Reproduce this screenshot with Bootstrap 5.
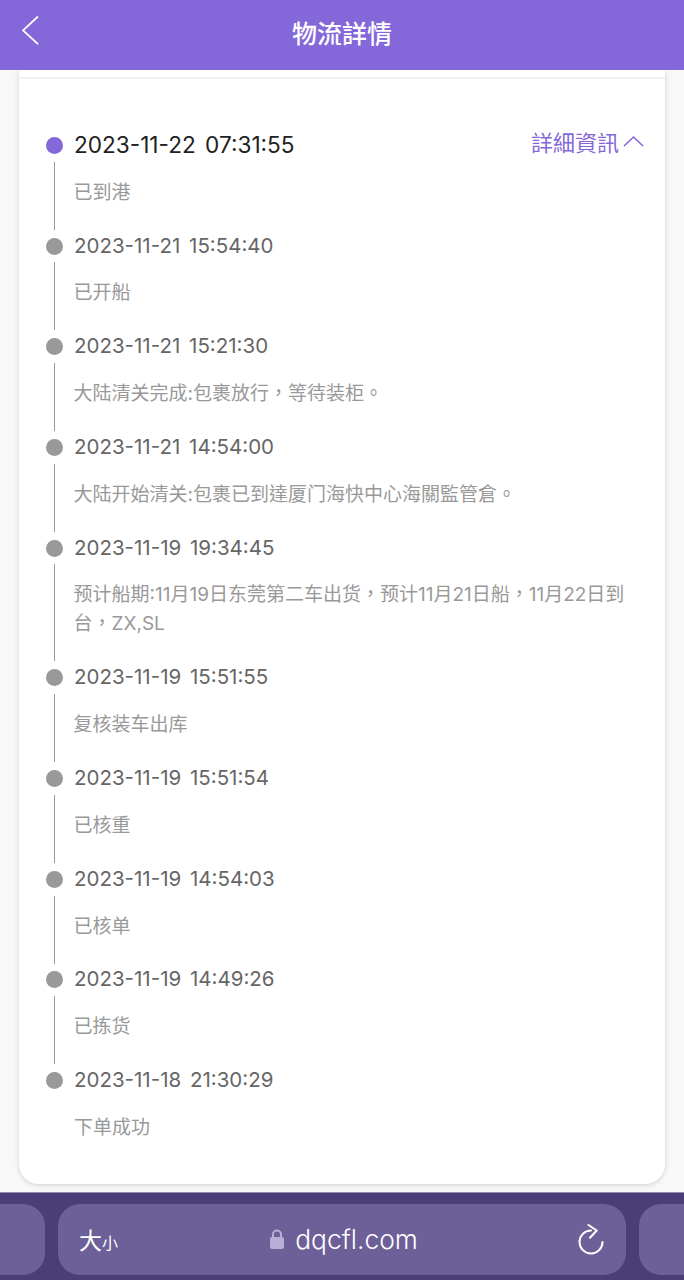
<!DOCTYPE html>
<html lang="zh-Hant">
<head>
  <meta charset="UTF-8"/>
  <meta name="viewport" content="width=device-width, initial-scale=1.0"/>
  <title>物流詳情</title>
  <link href="https://cdn.jsdelivr.net/npm/bootstrap@5.3.0/dist/css/bootstrap.min.css" rel="stylesheet"/>
  <style>
    body {
      background-color: #f8f8f8;
      font-family: Inter, "Noto Sans CJK TC", sans-serif;
      height: 1280px;
      overflow: hidden;
    }
    .top-head {
      height: 70px;
      padding-bottom: 4px;
      background-color: #8468d9;
      color: #fff;
      font-size: 25px;
      font-weight: 500;
      font-family: "Noto Sans CJK TC", sans-serif;
    }
    .back-btn {
      left: 21px;
      top: 15px;
      line-height: 0;
    }
    .page-body {
      padding: 0 19px;
      height: 1122px;
    }
    .sheet {
      height: 1114px;
      padding-top: 7px;
      background-color: #fff;
      border-radius: 0 0 20px 20px;
      box-shadow: 0 1px 5px rgba(0, 0, 0, .16);
    }
    .sheet-rule {
      height: 2px;
      background-color: #f0f0f0;
    }
    .track {
      padding: 50px 21px 0 27px;
    }
    .stamp {
      height: 32.7px;
      font-size: 20.5px;
      word-spacing: 3px;
      color: #666;
    }
    .stamp.now {
      font-size: 22.6px;
      color: #222;
    }
    .dot {
      width: 17px;
      height: 17px;
      margin-right: 11px;
      border-radius: 50%;
      background-color: #999;
    }
    .stamp.now .dot {
      background-color: #8468d9;
    }
    .more-link {
      color: #8468d9;
      font-size: 22px;
      font-family: "Noto Sans CJK TC", sans-serif;
      margin-top: -8px;
    }
    .note {
      margin-left: 8px;
      padding: 16px 10px 23px 18.5px;
      border-left: 1.5px solid #999;
      font-size: 19px;
      line-height: 29px;
      color: #999;
      font-family: Inter, "Noto Sans CJK TC", sans-serif;
    }
    .note.last {
      border-left: 0;
      padding-left: 20px;
    }
    .safari-bar {
      height: 88px;
      background-color: #4a3d78;
      border-top: 1px solid #8f88a8;
      padding-top: 11px;
      gap: 13px;
    }
    .url-tab {
      height: 71px;
      border-radius: 22px;
      background-color: #6d6098;
      flex: 0 0 568px;
      padding: 0 22px 0 21px;
      color: #fff;
    }
    .url-side {
      height: 71px;
      flex: 0 0 45px;
      border-radius: 0 22px 22px 0;
      background-color: #6d6098;
    }
    .url-side.right {
      border-radius: 22px 0 0 22px;
    }
    .font-size-btn {
      font-size: 23px;
      font-family: "Noto Sans CJK SC", sans-serif;
      line-height: 1;
    }
    .font-size-btn span {
      font-size: 16px;
    }
    .url-host {
      gap: 11px;
      margin-right: 8px;
    }
    .domain {
      font-size: 26.4px;
      font-family: Inter, sans-serif;
      font-weight: 300;
    }
  </style>
</head>
<body>

  <!-- header -->
  <div class="top-head position-relative d-flex align-items-center justify-content-center">
    <span class="back-btn position-absolute">
      <svg width="18" height="30" viewBox="0 0 18 30"><path d="M16.5 2 L2 15.3 L16.5 28.7" fill="none" stroke="#fff" stroke-width="1.8" stroke-linecap="round" stroke-linejoin="round"/></svg>
    </span>
    物流詳情
  </div>

  <div class="page-body">
    <div class="sheet">
      <div class="sheet-rule"></div>
      <div class="track">

        <div class="stamp now d-flex align-items-center">
          <span class="dot flex-shrink-0"></span>
          <span>2023-11-22 07:31:55</span>
          <span class="more-link ms-auto d-flex align-items-center">詳細資訊
            <svg class="ms-1" width="21" height="12" viewBox="0 0 21 12"><path d="M1 11 L10.5 2 L20 11" fill="none" stroke="#8468d9" stroke-width="1.6"/></svg>
          </span>
        </div>
        <div class="note">已到港</div>

        <div class="stamp d-flex align-items-center"><span class="dot flex-shrink-0"></span><span>2023-11-21 15:54:40</span></div>
        <div class="note">已开船</div>

        <div class="stamp d-flex align-items-center"><span class="dot flex-shrink-0"></span><span>2023-11-21 15:21:30</span></div>
        <div class="note">大陆清关完成:包裹放行，等待装柜。</div>

        <div class="stamp d-flex align-items-center"><span class="dot flex-shrink-0"></span><span>2023-11-21 14:54:00</span></div>
        <div class="note">大陆开始清关:包裹已到達厦门海快中心海關監管倉。</div>

        <div class="stamp d-flex align-items-center"><span class="dot flex-shrink-0"></span><span>2023-11-19 19:34:45</span></div>
        <div class="note">预计船期:11月19日东莞第二车出货，预计11月21日船，11月22日到台，ZX,SL</div>

        <div class="stamp d-flex align-items-center"><span class="dot flex-shrink-0"></span><span>2023-11-19 15:51:55</span></div>
        <div class="note">复核装车出库</div>

        <div class="stamp d-flex align-items-center"><span class="dot flex-shrink-0"></span><span>2023-11-19 15:51:54</span></div>
        <div class="note">已核重</div>

        <div class="stamp d-flex align-items-center"><span class="dot flex-shrink-0"></span><span>2023-11-19 14:54:03</span></div>
        <div class="note">已核单</div>

        <div class="stamp d-flex align-items-center"><span class="dot flex-shrink-0"></span><span>2023-11-19 14:49:26</span></div>
        <div class="note">已拣货</div>

        <div class="stamp d-flex align-items-center"><span class="dot flex-shrink-0"></span><span>2023-11-18 21:30:29</span></div>
        <div class="note last">下单成功</div>

      </div>
    </div>
  </div>

  <!-- browser bar -->
  <div class="safari-bar d-flex">
    <div class="url-side"></div>
    <div class="url-tab d-flex align-items-center justify-content-between">
      <span class="font-size-btn">大<span>小</span></span>
      <span class="url-host d-flex align-items-center">
        <svg width="14" height="20" viewBox="0 0 14 20"><path d="M3 9 V5.5 a4 4 0 0 1 8 0 V9" fill="none" stroke="#b9aed6" stroke-width="2"/><rect x="0" y="8" width="14" height="12" rx="2" fill="#b9aed6"/></svg>
        <span class="domain">dqcfl.com</span>
      </span>
      <svg width="26" height="32" viewBox="0 0 26 32"><path d="M13 6.5 A11.5 11.5 0 1 0 24.5 18" fill="none" stroke="#fff" stroke-width="2" stroke-linecap="round"/><path d="M10.5 1 L18.7 6.5 L12 13.8" fill="none" stroke="#fff" stroke-width="2" stroke-linecap="round" stroke-linejoin="round"/></svg>
    </div>
    <div class="url-side right"></div>
  </div>

</body>
</html>
